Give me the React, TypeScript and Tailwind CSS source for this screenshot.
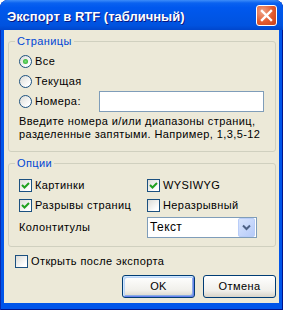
import React from "react";

function Check({ checked }: { checked?: boolean }) {
  return (
    <span className="flex h-[13px] w-[13px] shrink-0 items-center justify-center border border-[#1C5180] bg-[linear-gradient(135deg,#DCDCD7,#FFFFFF_80%)]">
      {checked && (
        <svg width="11" height="11" viewBox="0 0 11 11">
          <path d="M2 5 4.5 7.5 9 3" fill="none" stroke="#21A121" strokeWidth="2" />
        </svg>
      )}
    </span>
  );
}

function Radio({ checked }: { checked?: boolean }) {
  return (
    <span className="flex h-[13px] w-[13px] shrink-0 items-center justify-center rounded-full border border-[#1C5180] bg-[linear-gradient(135deg,#DCDCD7,#FFFFFF_80%)]">
      {checked && (
        <span className="h-[5px] w-[5px] rounded-full bg-[radial-gradient(circle,#7BE47A,#21A121)]" />
      )}
    </span>
  );
}

function Button({ label, isDefault }: { label: string; isDefault?: boolean }) {
  return (
    <button
      className={
        isDefault
          ? "flex h-[23px] w-[73px] items-center justify-center rounded-[3px] border border-[#003C74] bg-[linear-gradient(to_bottom,#FFFFFF,#F0EFEA_70%,#D8D3C8)] shadow-[inset_1px_1px_0_#CEE7FF,inset_-1px_-1px_0_#6982EE,inset_2px_2px_0_#BCD4F6,inset_-2px_-2px_0_#89ADE4]"
          : "flex h-[23px] w-[73px] items-center justify-center rounded-[3px] border border-[#003C74] bg-[linear-gradient(to_bottom,#FFFFFF,#F0EFEA_70%,#D8D3C8)]"
      }
    >
      {label}
    </button>
  );
}

export default function App() {
  return (
    <div className="flex h-[310px] w-[283px] flex-col overflow-hidden rounded-t-[8px] bg-[#0055EA] font-['Liberation_Sans',Arial,sans-serif] text-[11px] leading-[13px] text-black shadow-[inset_1px_0_0_#0A2AAE,inset_-1px_0_0_#00138C,inset_0_-1px_0_#00138C]">
      {/* title bar */}
      <div className="flex h-[30px] shrink-0 items-center bg-[linear-gradient(to_bottom,#3D8DF9_0%,#0A62F0_10%,#0058EE_25%,#0055E5_60%,#0052DF_85%,#0046CC_100%)] pl-[7px] pr-[6px]">
        <span className="pt-[3px] text-[13px] font-bold leading-[15px] text-white [text-shadow:1px_1px_0_#0A1883]">
          Экспорт в RTF (табличный)
        </span>
        <span className="ml-auto mt-[1px] flex h-[21px] w-[21px] items-center justify-center rounded-[3px] border border-white bg-[radial-gradient(circle_at_30%_30%,#F0A487,#E25A2E_55%,#C8401A)]">
          <svg width="13" height="13" viewBox="0 0 13 13">
            <path d="M2 2 11 11M11 2 2 11" stroke="white" strokeWidth="2.4" strokeLinecap="square" />
          </svg>
        </span>
      </div>

      {/* client */}
      <div className="mx-[4px] mb-[7px] flex flex-1 flex-col bg-[#ECE9D8] tracking-[0.4px]">
        <fieldset className="ml-[4px] mr-[3px] mt-[5px] rounded-[3px] border border-[#D0D0BF] pb-[10px] pl-[10px] pr-[10px]">
          <legend className="ml-[-4px] px-[2px] text-[#0046D5]">Страницы</legend>
          <div className="flex flex-col pt-[3px]">
            <div className="flex h-[20px] items-center gap-[3px]">
              <Radio checked />
              <span>Все</span>
            </div>
            <div className="flex h-[20px] items-center gap-[3px]">
              <Radio />
              <span>Текущая</span>
            </div>
            <div className="flex h-[20px] items-center gap-[3px]">
              <Radio />
              <span>Номера:</span>
              <span className="ml-auto mr-[1px] h-[21px] w-[165px] border border-[#7F9DB9] bg-white" />
            </div>
            <p className="mt-[4px]">
              Введите номера и/или диапазоны страниц,
              <br />
              разделенные запятыми. Например, 1,3,5-12
            </p>
          </div>
        </fieldset>

        <fieldset className="ml-[4px] mr-[3px] mt-[5px] rounded-[3px] border border-[#D0D0BF] pb-[8px] pl-[10px] pr-[10px]">
          <legend className="ml-[-4px] px-[2px] text-[#0046D5]">Опции</legend>
          <div className="grid grid-cols-[128px_1fr] pt-[5px]">
            <div className="flex h-[20px] items-center gap-[3px]">
              <Check checked />
              <span>Картинки</span>
            </div>
            <div className="flex h-[20px] items-center gap-[3px]">
              <Check checked />
              <span>WYSIWYG</span>
            </div>
            <div className="flex h-[20px] items-center gap-[3px]">
              <Check checked />
              <span>Разрывы страниц</span>
            </div>
            <div className="flex h-[20px] items-center gap-[3px]">
              <Check />
              <span>Неразрывный</span>
            </div>
            <div className="mt-[2px] flex h-[21px] items-center">Колонтитулы</div>
            <div className="mt-[2px] flex h-[21px] w-[110px] items-center border border-[#7F9DB9] bg-white pl-[2px] text-[12px]">
              <span>Текст</span>
              <span className="ml-auto mr-[1px] flex h-[19px] w-[17px] items-center justify-center rounded-[2px] border border-[#B9CDF8] bg-[linear-gradient(135deg,#D8E4FD,#B6CBF8)]">
                <svg width="9" height="7" viewBox="0 0 9 7">
                  <path d="M1 1.5 4.5 5 8 1.5" fill="none" stroke="#4D6185" strokeWidth="2" />
                </svg>
              </span>
            </div>
          </div>
        </fieldset>

        <div className="ml-[11px] mt-[4px] flex h-[20px] items-center gap-[3px]">
          <Check />
          <span>Открыть после экспорта</span>
        </div>

        <div className="mr-[3px] mt-[4px] flex justify-end gap-[8px]">
          <Button label="OK" isDefault />
          <Button label="Отмена" />
        </div>
      </div>
    </div>
  );
}
